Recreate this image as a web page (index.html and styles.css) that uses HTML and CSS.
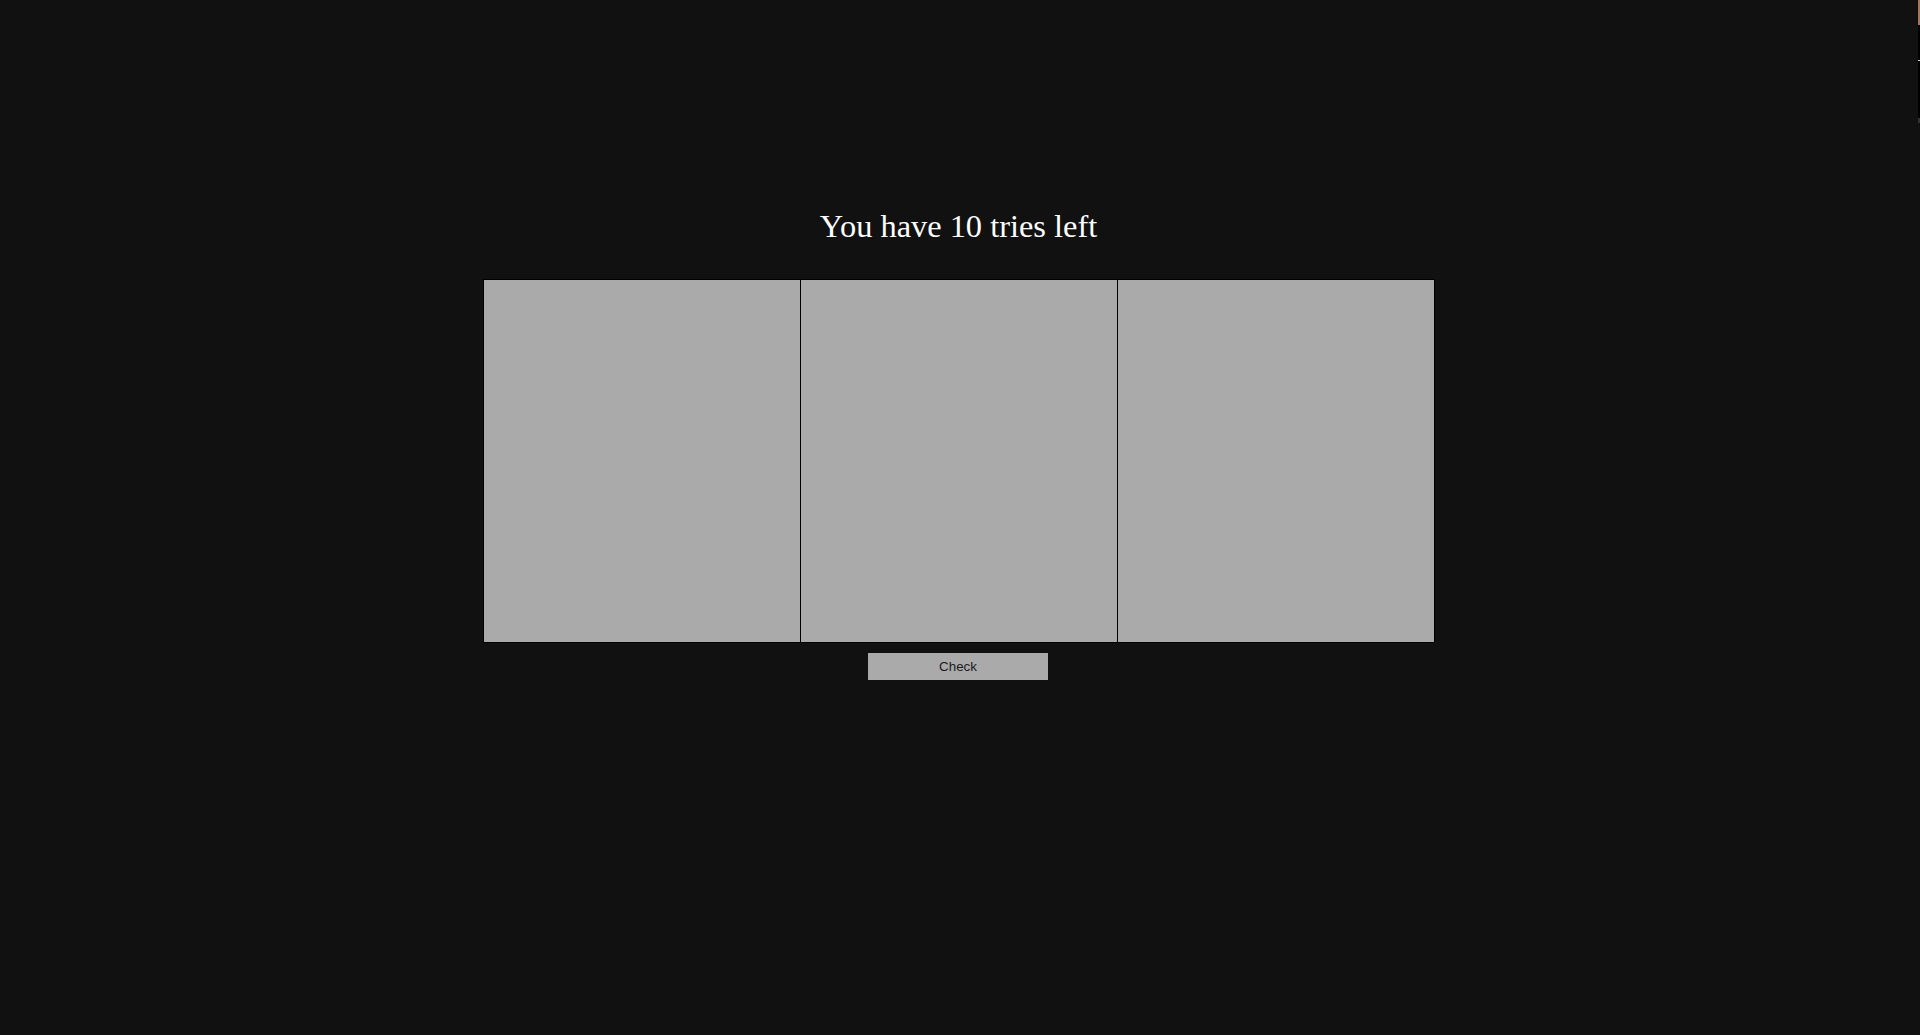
FILE: index.html
```html
<!DOCTYPE html>
<html>
<head>
<meta charset="utf-8">
<link rel="stylesheet" href="styles.css">
</head>
<body>
<div class="page">
  <h1 class="title">You have 10 tries left</h1>
  <div class="board">
    <div class="cell"></div>
    <div class="cell"></div>
    <div class="cell"></div>
  </div>
  <button class="check">Check</button>
</div>
<div class="edge">
  <div class="edge-top"></div>
  <div class="edge-mid"></div>
  <div class="edge-line"></div>
  <div class="edge-mid2"></div>
  <div class="edge-bot"></div>
</div>
</body>
</html>
```
FILE: styles.css
```css
html, body {
  margin: 0;
  padding: 0;
  background: #111111;
  height: 100%;
}
.page {
  display: flex;
  flex-direction: column;
  align-items: center;
  padding-top: 208px;
  padding-right: 3px;
}
.title {
  font-family: "Liberation Serif", "Times New Roman", serif;
  font-size: 32.4px;
  font-weight: normal;
  color: #ffffff;
  margin: 0 0 34px 0;
  line-height: 37px;
}
.board {
  display: flex;
  gap: 1px;
  width: 950px;
  height: 362px;
  border: 1px solid #000;
  background: #000;
}
.cell {
  flex: 1;
  background: #aaaaaa;
}
.check {
  margin-top: 10px;
  margin-right: 1px;
  width: 180px;
  height: 27px;
  border: none;
  background: #aaaaaa;
  color: #1a1a1a;
  font-family: "Liberation Sans", Arial, sans-serif;
  font-size: 13.33px;
  padding: 0;
}
.edge {
  position: absolute;
  top: 0;
  right: 0;
  width: 2px;
  display: flex;
  flex-direction: column;
}
.edge-top { height: 25px; background: #a8745a; }
.edge-mid { height: 35px; background: #000; }
.edge-line { height: 1px; background: #cccccc; }
.edge-mid2 { height: 57px; background: #000; }
.edge-bot { height: 5px; background: #333; }
```
